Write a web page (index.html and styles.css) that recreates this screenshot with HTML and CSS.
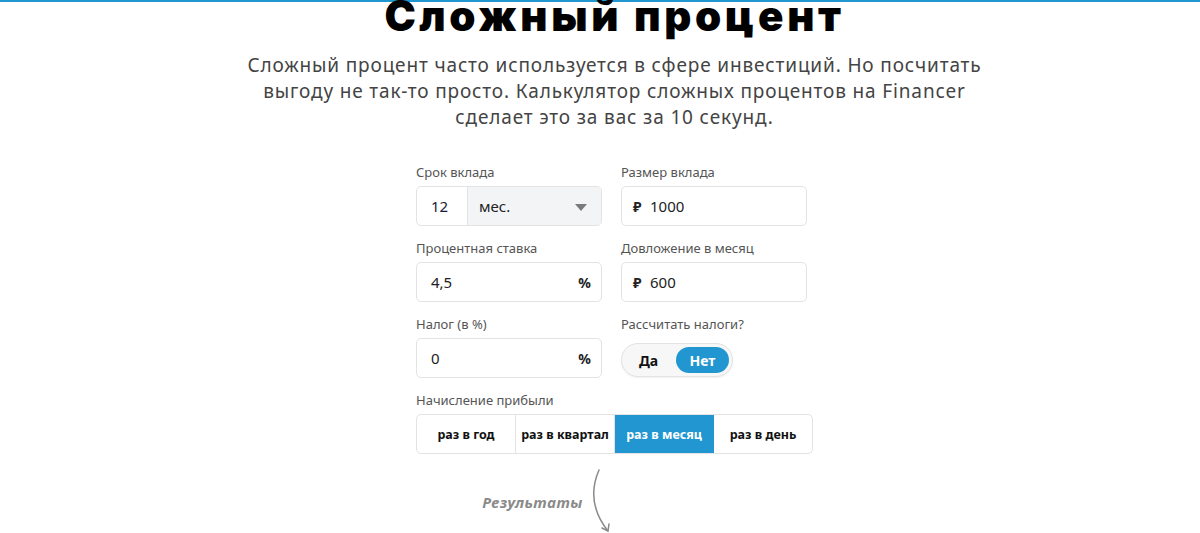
FILE: index.html
```html
<!DOCTYPE html>
<html lang="ru">
<head>
<meta charset="utf-8">
<link rel="stylesheet" href="styles.css">
</head>
<body>
<div class="topline"></div>
<main class="page">
  <h1 class="title">Сложный процент</h1>
  <p class="lead">Сложный процент часто используется в сфере инвестиций. Но посчитать<br>выгоду не так-то просто. Калькулятор сложных процентов на Financer<br>сделает это за вас за 10 секунд.</p>

  <form class="calc">
    <div class="grid">
      <div class="field">
        <label class="label">Срок вклада</label>
        <div class="box split">
          <span class="num">12</span>
          <span class="select">мес.<span class="caret"></span></span>
        </div>
      </div>
      <div class="field">
        <label class="label">Размер вклада</label>
        <div class="box"><span class="cur">₽</span><span class="val">1000</span></div>
      </div>
      <div class="field">
        <label class="label">Процентная ставка</label>
        <div class="box"><span class="val pad">4,5</span><span class="suffix">%</span></div>
      </div>
      <div class="field">
        <label class="label">Довложение в месяц</label>
        <div class="box"><span class="cur">₽</span><span class="val">600</span></div>
      </div>
      <div class="field">
        <label class="label">Налог (в %)</label>
        <div class="box"><span class="val pad">0</span><span class="suffix">%</span></div>
      </div>
      <div class="field">
        <label class="label">Рассчитать налоги?</label>
        <div class="toggle">
          <span class="opt">Да</span>
          <span class="opt active">Нет</span>
        </div>
      </div>
    </div>
    <div class="field profit">
      <label class="label">Начисление прибыли</label>
      <div class="segments">
        <span class="seg">раз в год</span>
        <span class="seg">раз в квартал</span>
        <span class="seg on">раз в месяц</span>
        <span class="seg">раз в день</span>
      </div>
    </div>
  </form>

  <div class="results">
    <span class="results-text">Результаты</span>
    <svg class="arrow" width="24" height="66" viewBox="0 0 24 66">
      <path d="M8 2 Q-6 34 17 63" fill="none" stroke="#8a8a8a" stroke-width="1.5" stroke-linecap="round"/>
      <path d="M11 60 L17 63 L18 56" fill="none" stroke="#8a8a8a" stroke-width="1.5" stroke-linecap="round" stroke-linejoin="round"/>
    </svg>
  </div>
</main>
</body>
</html>
```

FILE: styles.css
```css
* { box-sizing: border-box; }
html, body { margin: 0; padding: 0; background: #fff; overflow: hidden; }
body { font-family: "Noto Sans", "Open Sans", sans-serif; color: #222; }

.topline { height: 2px; background: #2196d0; }

.page {
  display: flex;
  flex-direction: column;
  align-items: center;
  padding-left: 29px;
}

.title {
  margin: -2px 0 0;
  font-family: Inter, "Noto Sans", sans-serif;
  font-weight: 900;
  font-size: 42px;
  line-height: 32px;
  color: #000;
  letter-spacing: 3.6px;
}

.lead {
  width: 800px;
  margin: 20px 0 0;
  text-align: center;
  font-size: 19px;
  line-height: 26px;
  color: #444;
  font-weight: 400;
  letter-spacing: 0.85px;
}

.calc {
  width: 397px;
  margin: 32px 0 0;
  display: flex;
  flex-direction: column;
}

.grid {
  display: grid;
  grid-template-columns: 186px 186px;
  column-gap: 19px;
  row-gap: 12px;
}

.field { display: flex; flex-direction: column; }

.label {
  font-size: 13px;
  line-height: 20px;
  color: #555;
  margin-bottom: 4px;
}

.box {
  height: 40px;
  border: 1px solid #e3e3e3;
  border-radius: 5px;
  display: flex;
  align-items: center;
  font-size: 15px;
  color: #222;
  overflow: hidden;
}

.num {
  width: 51px;
  height: 100%;
  display: flex;
  align-items: center;
  padding-left: 14px;
  border-right: 1px solid #e3e3e3;
  color: #1a1a3a;
}
.select {
  flex: 1;
  height: 100%;
  background: #f3f4f6;
  display: flex;
  align-items: center;
  padding-left: 11px;
  position: relative;
}
.caret {
  position: absolute;
  right: 14px;
  top: 17px;
  width: 0; height: 0;
  border-left: 6px solid transparent;
  border-right: 6px solid transparent;
  border-top: 7px solid #7a7a7a;
}

.cur { font-weight: 700; font-size: 14px; padding-left: 11px; width: 28px; }
.val { flex: 1; }
.val.pad { padding-left: 14px; }
.suffix { font-weight: 700; font-size: 14px; padding-right: 10px; }

.toggle {
  margin-top: 5px;
  width: 112px;
  height: 34px;
  border: 1px solid #e3e3e3;
  border-radius: 17px;
  background: #f7f7f8;
  display: flex;
  align-items: center;
  padding: 0 3px 0 17px;
  justify-content: space-between;
  box-shadow: 0 1px 2px rgba(0,0,0,0.06);
}
.opt { font-weight: 700; font-size: 14px; color: #111; }
.opt.active {
  background: #2196d0;
  color: #fff;
  border-radius: 13px;
  height: 26px;
  width: 53px;
  display: flex;
  align-items: center;
  justify-content: center;
}

.profit { margin-top: 12px; }

.segments {
  display: flex;
  height: 40px;
  border: 1px solid #e3e3e3;
  border-radius: 5px;
  overflow: hidden;
}
.seg {
  flex: 1;
  display: flex;
  align-items: center;
  justify-content: center;
  font-weight: 700;
  font-size: 12.5px;
  color: #111;
  border-right: 1px solid #e3e3e3;
  white-space: nowrap;
}
.seg:last-child { border-right: none; }
.seg.on { background: #2196d0; color: #fff; border-right-color: #2196d0; }

.results {
  margin-top: 14px;
  display: flex;
  align-items: flex-start;
  gap: 8px;
  margin-left: -132px;
}
.results-text {
  margin-top: 24px;
  font-style: italic;
  font-weight: 700;
  font-size: 15px;
  color: #8a8a8a;
  letter-spacing: 0.5px;
}
.arrow { display: block; }
```
